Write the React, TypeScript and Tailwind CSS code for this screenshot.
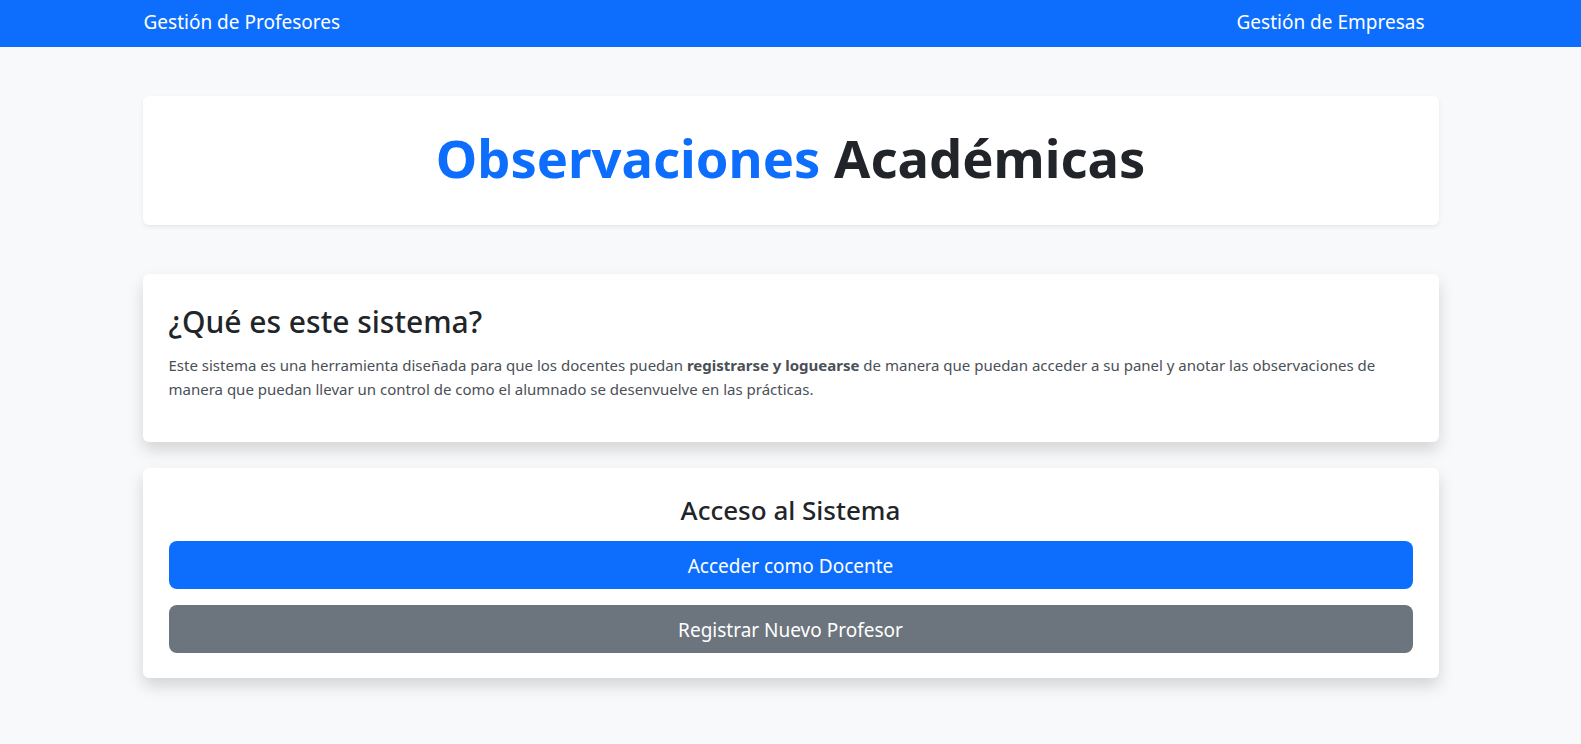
export default function App() {
  return (
    <div className="min-h-screen bg-[#f8f9fa] font-['Noto_Sans',sans-serif] text-[#212529]">
      <nav className="bg-[#0d6efd]">
        <div className="mx-auto flex h-[47px] max-w-[1320px] items-center justify-between px-3 pb-[3px] text-[19px] text-white">
          <a className="pl-[1px]">Gestión de Profesores</a>
          <a className="pr-[14px]">Gestión de Empresas</a>
        </div>
      </nav>

      <main className="mx-auto max-w-[1320px] px-3 pt-[49px]">
        <div className="mb-[49px] flex h-[129px] items-center justify-center rounded-md bg-white pb-[5px] shadow-[0_0.125rem_0.25rem_rgba(0,0,0,0.075)]">
          <h1 className="text-[52.5px] font-bold leading-none">
            <span className="text-[#0d6efd]">Observaciones</span> Académicas
          </h1>
        </div>

        <div className="mb-[26px] rounded-md bg-white px-[26px] pb-[25px] pt-[29px] shadow-[0_0.5rem_1rem_rgba(0,0,0,0.15)]">
          <h2 className="mb-3 text-[30px] font-medium leading-[1.25]">¿Qué es este sistema?</h2>
          <p className="mb-4 text-[15px] leading-6 text-[#495057]">
            Este sistema es una herramienta diseñada para que los docentes puedan{" "}
            <strong className="font-bold">registrarse y loguearse</strong> de manera que puedan acceder
            a su panel y anotar las observaciones de manera que puedan llevar un control de como el
            alumnado se desenvuelve en las prácticas.
          </p>
        </div>

        <div className="rounded-md bg-white px-[26px] pb-[25px] pt-[25px] shadow-[0_0.5rem_1rem_rgba(0,0,0,0.15)]">
          <h3 className="mb-[14px] text-center text-[26px] font-medium leading-[34px]">Acceso al Sistema</h3>
          <button className="mb-4 block h-[48px] w-full rounded-lg bg-[#0d6efd] pt-[4px] text-[19px] text-white">
            Acceder como Docente
          </button>
          <button className="block h-[48px] w-full rounded-lg bg-[#6c757d] pt-[4px] text-[19px] text-white">
            Registrar Nuevo Profesor
          </button>
        </div>
      </main>
    </div>
  );
}
